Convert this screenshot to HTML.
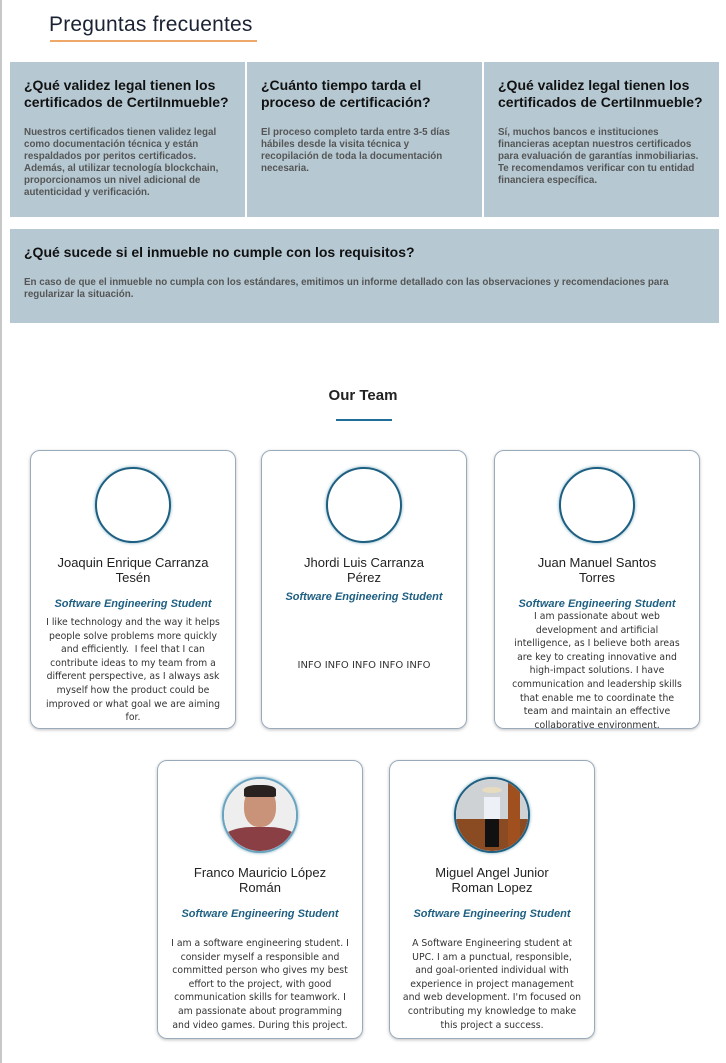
<!DOCTYPE html>
<html><head><meta charset="utf-8"><style>
body{margin:0;width:726px;height:1063px;background:#fff;font-family:"Liberation Sans",sans-serif;position:relative;overflow:hidden}
.lb{position:absolute;left:0;top:0;width:2px;height:1063px;background:#c8c8c8}
h1{position:absolute;left:49px;top:13px;margin:0;font-size:21px;font-weight:500;color:#1a2233;letter-spacing:.2px}
.ul{position:absolute;left:50px;top:40px;width:207px;height:2px;background:#f0a868}
.faq{position:absolute;background:#b6c9d3;box-sizing:border-box;padding:15px 14px}
.faq h3{margin:0 0 16px;font-size:14px;line-height:17px;color:#111;font-weight:bold}
.faq p{margin:0;font-size:9.8px;line-height:12px;color:#555;font-weight:bold}
.tt{position:absolute;top:387px;left:0;width:726px;text-align:center;font-size:15px;font-weight:bold;color:#222}
.tl{position:absolute;left:336px;top:419px;width:56px;height:2px;background:#1f6f98}
.card{position:absolute;width:206px;height:279px;border:1px solid #9ab;border-radius:10px;box-sizing:border-box;text-align:center;box-shadow:0 1px 3px rgba(0,0,0,.25)}
.av{width:72px;height:72px;border-radius:50%;border:2px solid #1e5f82;margin:16px auto 0;box-shadow:0 0 3px #7ab;background:#fff;overflow:hidden;position:relative}
.nm{margin-top:12px;font-size:13px;line-height:15px;color:#222;padding:0 10px;white-space:nowrap}
.rl{margin-top:13px;font-size:11px;font-style:italic;font-weight:bold;color:#1e5f82}
.ds{font-family:"DejaVu Sans",sans-serif;font-size:9.3px;line-height:13.6px;color:#333;padding:0 12px;margin-top:6px}
</style></head><body>
<div class="lb"></div>
<h1>Preguntas frecuentes</h1><div class="ul"></div>
<div class="faq" style="left:10px;top:62px;width:235px;height:155px"><h3>¿Qué validez legal tienen los certificados de CertiInmueble?</h3><p>Nuestros certificados tienen validez legal como documentación técnica y están respaldados por peritos certificados. Además, al utilizar tecnología blockchain, proporcionamos un nivel adicional de autenticidad y verificación.</p></div>
<div class="faq" style="left:247px;top:62px;width:235px;height:155px"><h3>¿Cuánto tiempo tarda el proceso de certificación?</h3><p>El proceso completo tarda entre 3-5 días hábiles desde la visita técnica y recopilación de toda la documentación necesaria.</p></div>
<div class="faq" style="left:484px;top:62px;width:235px;height:155px"><h3>¿Qué validez legal tienen los certificados de CertiInmueble?</h3><p>Sí, muchos bancos e instituciones financieras aceptan nuestros certificados para evaluación de garantías inmobiliarias. Te recomendamos verificar con tu entidad financiera específica.</p></div>
<div class="faq" style="left:10px;top:229px;width:709px;height:94px"><h3>¿Qué sucede si el inmueble no cumple con los requisitos?</h3><p>En caso de que el inmueble no cumpla con los estándares, emitimos un informe detallado con las observaciones y recomendaciones para regularizar la situación.</p></div>
<div class="tt">Our Team</div><div class="tl"></div>
<div class="card" style="left:30px;top:450px"><div class="av"></div><div class="nm">Joaquin Enrique Carranza<br>Tesén</div><div class="rl">Software Engineering Student</div><div class="ds">I like technology and the way it helps people solve problems more quickly and efficiently.&nbsp; I feel that I can contribute ideas to my team from a different perspective, as I always ask myself how the product could be improved or what goal we are aiming for.</div></div>
<div class="card" style="left:261px;top:450px"><div class="av"></div><div class="nm">Jhordi Luis Carranza<br>Pérez</div><div class="rl" style="margin-top:6px">Software Engineering Student</div><div class="ds" style="margin-top:56px;font-size:10px">INFO INFO INFO INFO INFO</div></div>
<div class="card" style="left:494px;top:450px"><div class="av"></div><div class="nm">Juan Manuel Santos<br>Torres</div><div class="rl">Software Engineering Student</div><div class="ds" style="margin-top:0">I am passionate about web development and artificial intelligence, as I believe both areas are key to creating innovative and high-impact solutions. I have communication and leadership skills that enable me to coordinate the team and maintain an effective collaborative environment.</div></div>
<div class="card" style="left:157px;top:760px"><div class="av" style="border-color:#6aa3c0"><div style="position:absolute;inset:0;background:#eee"></div><div style="position:absolute;left:20px;top:8px;width:32px;height:40px;border-radius:45%;background:#c9937a"></div><div style="position:absolute;left:20px;top:6px;width:32px;height:12px;border-radius:40% 40% 10% 10%;background:#2a2220"></div><div style="position:absolute;left:-5px;top:48px;width:82px;height:40px;border-radius:40% 40% 0 0;background:#8a3f45"></div></div><div class="nm">Franco Mauricio López<br>Román</div><div class="rl">Software Engineering Student</div><div class="ds" style="margin-top:17px">I am a software engineering student. I consider myself a responsible and committed person who gives my best effort to the project, with good communication skills for teamwork. I am passionate about programming and video games. During this project.</div></div>
<div class="card" style="left:389px;top:760px"><div class="av"><div style="position:absolute;inset:0;background:#cfd2d4"></div><div style="position:absolute;left:0;top:40px;width:72px;height:32px;background:#8a4a22"></div><div style="position:absolute;left:52px;top:0;width:12px;height:72px;background:#a0501e"></div><div style="position:absolute;left:28px;top:18px;width:16px;height:22px;background:#eef0f8"></div><div style="position:absolute;left:29px;top:40px;width:14px;height:28px;background:#111"></div><div style="position:absolute;left:26px;top:8px;width:20px;height:6px;border-radius:50%;background:#e8dcc0"></div></div><div class="nm">Miguel Angel Junior<br>Roman Lopez</div><div class="rl">Software Engineering Student</div><div class="ds" style="margin-top:17px">A Software Engineering student at UPC. I am a punctual, responsible, and goal-oriented individual with experience in project management and web development. I'm focused on contributing my knowledge to make this project a success.</div></div>
</body></html>
